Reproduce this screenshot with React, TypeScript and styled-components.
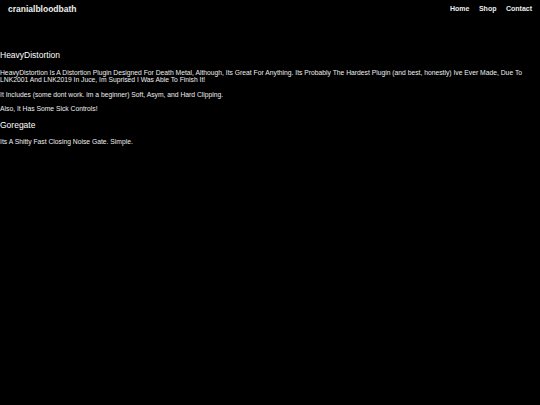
import React from 'react';
import styled, { createGlobalStyle } from 'styled-components';

const GlobalStyle = createGlobalStyle`
    html, body {
        margin: 0;
        padding: 0;
        background: #000;
    }
    body {
        font-family: 'Liberation Sans', Arial, sans-serif;
        color: #fff;
    }
`;

const Page = styled.div`
    min-height: 405px;
    background: #000;
`;

const Header = styled.header`
    display: flex;
    align-items: center;
    justify-content: space-between;
    padding: 0 8px;
    height: 17px;
`;

const Brand = styled.div`
    font-size: 8.5px;
    font-weight: bold;
    color: #eee;
`;

const Nav = styled.nav`
    display: flex;
    gap: 9.5px;
`;

const NavLink = styled.a`
    font-size: 7px;
    font-weight: bold;
    color: #eee;
    text-decoration: none;
`;

const Main = styled.main`
    padding-top: 33px;
`;

const Title = styled.h2`
    font-size: 8.5px;
    font-weight: normal;
    line-height: 10px;
    margin: 0 0 8.5px 0;
    color: #fff;
`;

const Text = styled.p`
    font-size: 6.75px;
    line-height: 7.5px;
    margin: 0 0 7px 0;
    color: #eee;
`;

const App: React.FC = () => {
    return (
        <React.Fragment>
            <GlobalStyle />
            <Page>
                <Header>
                    <Brand>cranialbloodbath</Brand>
                    <Nav>
                        <NavLink href="#">Home</NavLink>
                        <NavLink href="#">Shop</NavLink>
                        <NavLink href="#">Contact</NavLink>
                    </Nav>
                </Header>
                <Main>
                    <Title>HeavyDistortion</Title>
                    <Text>
                        HeavyDistortion Is A Distortion Plugin Designed For Death Metal, Although, Its Great For
                        Anything. Its Probably The Hardest Plugin (and best, honestly) Ive Ever Made, Due To LNK2001
                        And LNK2019 In Juce, Im Suprised I Was Able To Finish It!
                    </Text>
                    <Text>It Includes (some dont work. im a beginner) Soft, Asym, and Hard Clipping.</Text>
                    <Text>Also, It Has Some Sick Controls!</Text>
                    <Title>Goregate</Title>
                    <Text>Its A Shitty Fast Closing Noise Gate. Simple.</Text>
                </Main>
            </Page>
        </React.Fragment>
    );
};

export default App;
